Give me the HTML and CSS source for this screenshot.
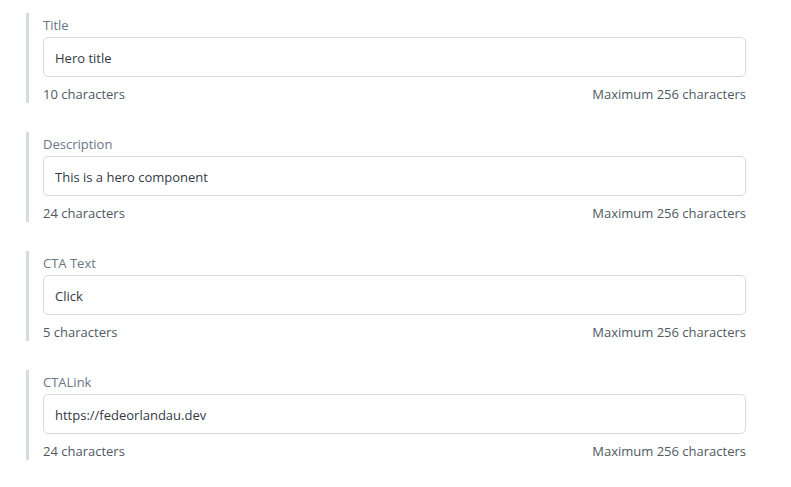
FILE: index.html
```html
<!DOCTYPE html>
<html>
<head>
<meta charset="utf-8">
<link rel="stylesheet" href="styles.css">
</head>
<body>
<div class="form">
  <div class="field">
    <label class="label">Title</label>
    <input class="input" type="text" value="Hero title">
    <div class="meta"><span>10 characters</span><span>Maximum 256 characters</span></div>
  </div>
  <div class="field">
    <label class="label">Description</label>
    <input class="input" type="text" value="This is a hero component">
    <div class="meta"><span>24 characters</span><span>Maximum 256 characters</span></div>
  </div>
  <div class="field">
    <label class="label">CTA Text</label>
    <input class="input" type="text" value="Click">
    <div class="meta"><span>5 characters</span><span>Maximum 256 characters</span></div>
  </div>
  <div class="field">
    <label class="label">CTALink</label>
    <input class="input" type="text" value="https://fedeorlandau.dev">
    <div class="meta"><span>24 characters</span><span>Maximum 256 characters</span></div>
  </div>
</div>
</body>
</html>
```
FILE: styles.css
```css
html, body {
  margin: 0;
  padding: 0;
  background: #ffffff;
}
body {
  font-family: "Open Sans", "Noto Sans", sans-serif;
  font-size: 13px;
}
.form {
  display: flex;
  flex-direction: column;
  gap: 29px;
  padding: 13px 45px 0 26px;
}
.field {
  display: flex;
  flex-direction: column;
  border-left: 3px solid #d3dbe3;
  padding: 3px 0 0 14px;
}
.label {
  line-height: 18px;
  color: #6b7785;
  margin-bottom: 3px;
}
.input {
  box-sizing: border-box;
  height: 40px;
  width: 100%;
  border: 1px solid #d3dae2;
  border-radius: 5px;
  padding: 2px 11px 0;
  font-family: inherit;
  font-size: 13px;
  color: #333a44;
  background: #ffffff;
  outline: none;
  margin: 0;
}
.meta {
  display: flex;
  justify-content: space-between;
  margin-top: 8px;
  line-height: 18px;
  color: #4f5964;
}
```
